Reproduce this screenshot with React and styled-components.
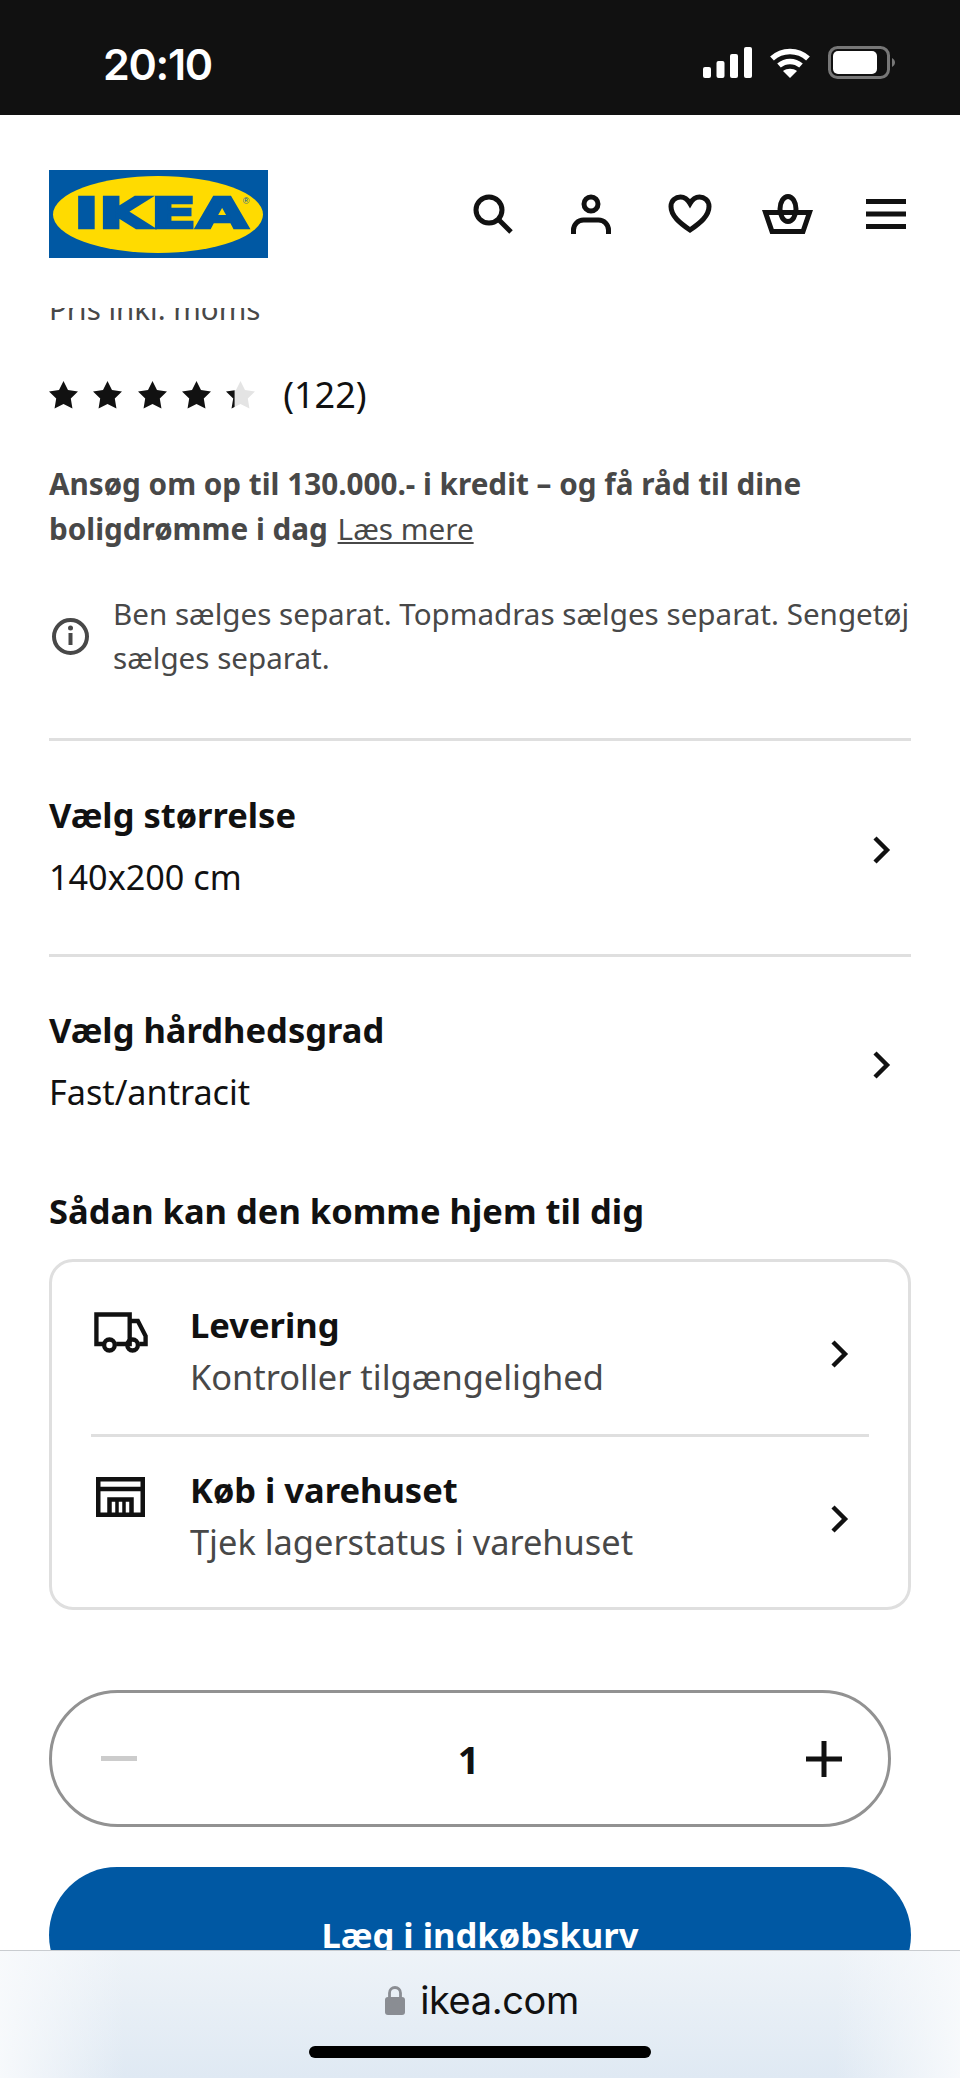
import React from "react";
import styled, { createGlobalStyle } from "styled-components";

const Global = createGlobalStyle`
  html, body { margin: 0; padding: 0; background: #fff; }
  * { box-sizing: border-box; }
`;
const Page = styled.div`
  width: 960px; height: 2078px; display: flex; flex-direction: column; overflow: hidden;
  font-family: "Noto Sans", sans-serif; color: #111; background: #fff;
`;
const StatusBar = styled.div`
  height: 115px; flex: none; background: #111; display: flex; align-items: flex-start;
  justify-content: space-between; padding: 40px 65px 0 103px;
`;
const Time = styled.div`
  font-family: Inter, sans-serif; font-weight: 600; font-size: 43px; line-height: 48px; color: #fff; letter-spacing: -1.3px;
`;
const StatusIcons = styled.div`display: flex; align-items: center; gap: 17px; margin-top: 6px;`;
const Svg = styled.svg`display: block; flex: none;`;
const NavIcon = styled(Svg)`margin-left: ${(p) => p.$ml || 0}px;`;
const Header = styled.header`
  height: 193px; flex: none; display: flex; justify-content: space-between; align-items: flex-start;
  padding: 55px 54px 0 49px; background: #fff;
`;
const Nav = styled.nav`display: flex; align-items: center; margin-top: 24px;`;
const Content = styled.main`flex: 1; min-height: 0; overflow: hidden; padding: 0 49px;`;
const PriceNote = styled.div`
  height: 13px; overflow: hidden; display: flex; align-items: flex-end; font-size: 29.5px; line-height: 24px; color: #484848;
`;
const Rating = styled.div`display: flex; align-items: center; margin-top: 54px; height: 40px;`;
const Stars = styled.div`display: flex; gap: 15.3px;`;
const Count = styled.span`font-size: 36px; line-height: 40px; margin-left: 28px;`;
const Promo = styled.p`margin: 47px 0 0; font-size: 29.7px; line-height: 44.5px; color: #484848; font-weight: 700;`;
const Link = styled.a`font-weight: 400; text-decoration: underline; margin-left: 2px;`;
const Info = styled.div`display: flex; align-items: center; gap: 24px; margin-top: 41px; margin-left: 3px;`;
const InfoText = styled.p`margin: 0; font-size: 29.6px; line-height: 44px; color: #484848; white-space: nowrap;`;
const Selector = styled.div`
  display: flex; align-items: center; justify-content: space-between; border-top: 3px solid #dfdfdf;
  height: ${(p) => p.$h}px; padding: 0 20px ${(p) => p.$pb || 0}px 0; margin-top: ${(p) => p.$mt || 0}px;
`;
const SelectorChevron = styled.div`margin-top: 8px;`;
const SelectorTitle = styled.div`font-size: 34.5px; line-height: 44px; font-weight: 700;`;
const SelectorValue = styled.div`font-size: 34.2px; line-height: 44px; margin-top: 18px;`;
const Heading = styled.h2`margin: 25px 0 0; font-size: 34.5px; line-height: 44px; font-weight: 700;`;
const Card = styled.div`
  margin-top: 26px; height: 351px; border: 3px solid #dfdfdf; border-radius: 24px; padding: 0 39px;
  display: flex; flex-direction: column;
`;
const Row = styled.div`
  flex: ${(p) => (p.$line ? "0 0 175px" : "1")}; display: flex; align-items: flex-start; padding-top: ${(p) => p.$pt}px;
  ${(p) => p.$line && "border-bottom: 3px solid #dfdfdf;"}
`;
const RowIcon = styled.div`width: 99px; flex: none; padding: 0 0 0 ${(p) => p.$pl}px; margin-top: ${(p) => p.$mt}px;`;
const RowBody = styled.div`flex: 1;`;
const RowTitle = styled.div`font-size: 34.5px; line-height: 44px; font-weight: 700;`;
const RowSub = styled.div`font-size: 34.4px; line-height: 44px; color: #484848; margin-top: 8px;`;
const RowChevron = styled.div`margin: ${(p) => p.$mt}px 20px 0 0;`;
const Qty = styled.div`
  margin-top: 80px; width: 842px; height: 137px; border: 3px solid #929292; border-radius: 69px;
  display: flex; align-items: center; justify-content: space-between; padding: 0 46px 0 49px;
`;
const QtyValue = styled.div`font-size: 38px; font-weight: 700; line-height: 44px; margin-right: 6px;`;
const CartButton = styled.button`
  display: block; width: 862px; height: 136px; margin: 40px 0 0; border: 0; border-radius: 68px; background: #0058a3;
  color: #fff; font: 700 34.6px/44px "Noto Sans", sans-serif; padding: 0;
`;
const BrowserBar = styled.footer`
  height: 128px; flex: none; border-top: 1.5px solid #c9ccd0; display: flex; flex-direction: column; align-items: center;
  background:
    linear-gradient(90deg, rgba(248,250,252,.95) 0, rgba(248,250,252,0) 13%, rgba(248,250,252,0) 87%, rgba(248,250,252,.95) 100%),
    linear-gradient(180deg, #eef3f8 0, #dfe9f3 100%);
`;
const Address = styled.div`display: flex; align-items: center; gap: 15px; margin: 27px 0 0 4px; height: 44px;`;
const Domain = styled.span`font-family: Inter, sans-serif; font-size: 38px; line-height: 44px; color: #111; letter-spacing: -.4px;`;
const HomeBar = styled.div`width: 342px; height: 12px; border-radius: 6px; background: #000; margin-top: 24px;`;

const STAR = "M14.5 0L19.08 9.19 29.24 10.71 21.92 17.91 23.61 28.04 14.5 23.3 5.39 28.04 7.08 17.91 -.24 10.71 9.92 9.19z";
const Star = ({ half }) => (
  <Svg width="29" height="28" viewBox="0 0 29 28.500">
    <defs>
      <clipPath id="leftStar"><rect x="-1" y="0" width="9.500" height="29" /></clipPath>
    </defs>
    <path d={STAR} fill={half ? "#e4e4e4" : "#111"} />
    {half && <path d={STAR} fill="#111" clipPath="url(#leftStar)" />}
  </Svg>
);
const Chevron = () => (
  <Svg width="19" height="28" viewBox="0 0 19 28" fill="none" stroke="#111" strokeWidth="4.4">
    <path d="M3 2l12 12L3 26" />
  </Svg>
);

export default function App() {
  return (
    <Page>
      <Global />
      <StatusBar>
        <Time>20:10</Time>
        <StatusIcons>
          <Svg width="49" height="31" viewBox="0 0 49 31" fill="#fff">
            <rect x="0" y="20" width="8" height="11" rx="2" />
            <rect x="13.5" y="14" width="8" height="17" rx="2" />
            <rect x="27" y="7" width="8" height="24" rx="2" />
            <rect x="41" y="0" width="8" height="31" rx="2" />
          </Svg>
          <Svg width="42" height="31" viewBox="0 0 42 31" fill="none" stroke="#fff" strokeWidth="5.5">
            <path d="M3 11.5C13 2 29 2 39 11.5" />
            <path d="M10 18.5c6.5-5.5 15.5-5.5 22 0" />
            <path d="M21 31l-7-7c4-3 10-3 14 0z" fill="#fff" stroke="none" />
          </Svg>
          <Svg width="67" height="33" viewBox="0 0 67 33" fill="none">
            <rect x="1.5" y="1.5" width="59" height="30" rx="8" stroke="#777" strokeWidth="3" />
            <rect x="5" y="5" width="44" height="23" rx="5" fill="#fff" />
            <path d="M64 12c2 1 3 3 3 4.500s-1 3.500-3 4.500z" fill="#777" />
          </Svg>
        </StatusIcons>
      </StatusBar>
      <Header>
        <Svg width="219" height="88" viewBox="0 0 219 88" role="img" aria-label="IKEA">
          <rect width="219" height="88" fill="#0058a3" />
          <ellipse cx="109" cy="44.500" rx="105" ry="38.500" fill="#ffdb00" />
          <text x="25" y="58" fontFamily="DejaVu Sans" fontWeight="700" fontSize="42" fill="#0058a3" stroke="#0058a3" strokeWidth="2.500" textLength="174" lengthAdjust="spacingAndGlyphs">IKEA</text>
          <text x="197" y="34" fontFamily="Liberation Sans" fontSize="9" fill="#0058a3" textAnchor="middle">®</text>
        </Svg>
        <Nav>
          <NavIcon width="40" height="40" viewBox="0 0 40 40" fill="none" stroke="#111" strokeWidth="5">
            <circle cx="16" cy="16" r="13" />
            <path d="M25.500 25.500L38 38" />
          </NavIcon>
          <NavIcon $ml={58} width="40" height="40" viewBox="0 0 40 40" fill="none" stroke="#111" strokeWidth="5">
            <circle cx="20" cy="10" r="7" />
            <path d="M2.500 40v-4a10 10 0 0 1 10-10h15a10 10 0 0 1 10 10v4" />
          </NavIcon>
          <NavIcon $ml={57} width="44" height="40" viewBox="0 0 44 40" fill="none" stroke="#111" strokeWidth="5">
            <path d="M22 36C12 29 3 22 3 12.500 3 6 8 3 12.500 3 17 3 20 6 22 9.500 24 6 27 3 31.500 3 36 3 41 6 41 12.500 41 22 32 29 22 36z" />
          </NavIcon>
          <NavIcon $ml={50} width="51" height="40" viewBox="0 0 51 40" fill="none" stroke="#111" strokeWidth="5">
            <path d="M3.500 18.500h44L41 37.500H10z" />
            <ellipse cx="26" cy="15" rx="8" ry="12.500" />
          </NavIcon>
          <NavIcon $ml={53} width="40" height="32" viewBox="0 0 40 32" fill="#111">
            <rect y="1" width="40" height="5" />
            <rect y="13.500" width="40" height="5" />
            <rect y="26" width="40" height="5" />
          </NavIcon>
        </Nav>
      </Header>
      <Content>
        <PriceNote>Pris inkl. moms</PriceNote>
        <Rating>
          <Stars>
            <Star /><Star /><Star /><Star /><Star half />
          </Stars>
          <Count>(122)</Count>
        </Rating>
        <Promo>
          Ansøg om op til 130.000.- i kredit – og få råd til dine<br />
          boligdrømme i dag <Link>Læs mere</Link>
        </Promo>
        <Info>
          <Svg width="37" height="37" viewBox="0 0 37 37" fill="none" stroke="#484848" strokeWidth="4">
            <circle cx="18.500" cy="18.500" r="16.500" />
            <path d="M18.500 15v12" />
            <circle cx="18.500" cy="10" r="2.500" fill="#484848" stroke="none" />
          </Svg>
          <InfoText>
            Ben sælges separat. Topmadras sælges separat. Sengetøj<br />sælges separat.
          </InfoText>
        </Info>
        <Selector $h={216} $mt={58} $pb={4}>
          <div>
            <SelectorTitle>Vælg størrelse</SelectorTitle>
            <SelectorValue>140x200 cm</SelectorValue>
          </div>
          <SelectorChevron><Chevron /></SelectorChevron>
        </Selector>
        <Selector $h={210}>
          <div>
            <SelectorTitle>Vælg hårdhedsgrad</SelectorTitle>
            <SelectorValue>Fast/antracit</SelectorValue>
          </div>
          <SelectorChevron><Chevron /></SelectorChevron>
        </Selector>
        <Heading>Sådan kan den komme hjem til dig</Heading>
        <Card>
          <Row $pt={41} $line>
            <RowIcon $pl={3} $mt={9}>
              <Svg width="54" height="41" viewBox="0 0 56 41" preserveAspectRatio="none" fill="none" stroke="#111" strokeWidth="4.500">
                <path d="M10 32H2.500V2.500H37V32H23" />
                <path d="M37 9h8.500l8 15V32H47" />
                <path d="M37 32h-3" />
                <circle cx="16" cy="33" r="5.500" />
                <circle cx="40" cy="33" r="5.500" />
              </Svg>
            </RowIcon>
            <RowBody>
              <RowTitle>Levering</RowTitle>
              <RowSub>Kontroller tilgængelighed</RowSub>
            </RowBody>
            <RowChevron $mt={37}><Chevron /></RowChevron>
          </Row>
          <Row $pt={31}>
            <RowIcon $pl={5} $mt={9}>
              <Svg width="49" height="40" viewBox="0 0 49 40" fill="none" stroke="#111" strokeWidth="4.500">
                <path d="M2.250 2.250h44.500v35.500H2.250z" />
                <path d="M2.250 12h44.500" />
                <path d="M13.500 38V22.500h22V38" />
                <path d="M21 22.500V38M28 22.500V38" strokeWidth="3.500" />
              </Svg>
            </RowIcon>
            <RowBody>
              <RowTitle>Køb i varehuset</RowTitle>
              <RowSub>Tjek lagerstatus i varehuset</RowSub>
            </RowBody>
            <RowChevron $mt={37}><Chevron /></RowChevron>
          </Row>
        </Card>
        <Qty>
          <Svg width="36" height="5" viewBox="0 0 36 5" fill="#ccc"><rect width="36" height="5" /></Svg>
          <QtyValue>1</QtyValue>
          <Svg width="36" height="36" viewBox="0 0 36 36" fill="#111">
            <rect y="15.500" width="36" height="5" />
            <rect x="15.500" width="5" height="36" />
          </Svg>
        </Qty>
        <CartButton>Læg i indkøbskurv</CartButton>
      </Content>
      <BrowserBar>
        <Address>
          <Svg width="20" height="30" viewBox="0 0 20 30" fill="none">
            <path d="M4.500 13V8a5.500 5.500 0 0 1 11 0v5" stroke="#8a8d93" strokeWidth="2.800" />
            <rect y="12" width="20" height="18" rx="3" fill="#8a8d93" />
          </Svg>
          <Domain>ikea.com</Domain>
        </Address>
        <HomeBar />
      </BrowserBar>
    </Page>
  );
}
